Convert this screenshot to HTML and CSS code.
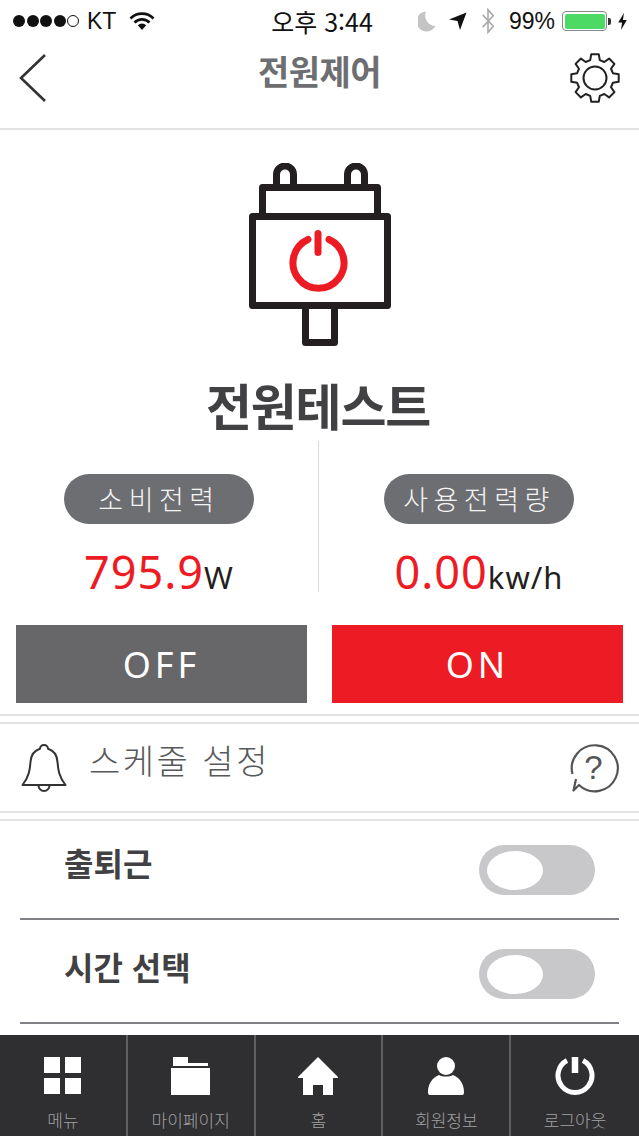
FILE: index.html
```html
<!DOCTYPE html>
<html lang="ko">
<head>
    <meta charset="UTF-8">
    <title>전원제어</title>
    <link rel="stylesheet" href="styles.css">
</head>
<body>
<div class="screen">
    <div class="statusbar">
        <div class="status-left">
            <span class="dots"><i></i><i></i><i></i><i></i><i class="empty"></i></span>
            <span>KT</span>
            <svg class="wifi" width="26" height="20" viewBox="0 0 26 20"><path d="M1.500 7.500a16 16 0 0 1 23 0M5.500 11.500a10.500 10.500 0 0 1 15 0" fill="none" stroke="#111" stroke-width="2.600"/><path d="M8.800 14.200a6 6 0 0 1 8.400 0L13 19z" fill="#111"/></svg>
        </div>
        <div class="status-time">오후 3:44</div>
        <div class="status-right">
            <svg width="18" height="22" viewBox="0 0 18 22"><path d="M8 1.500a10 10 0 1 0 9.500 14.500A10.500 10.500 0 0 1 8 1.500z" fill="#c4c4c4"/></svg>
            <svg width="18" height="18" viewBox="0 0 18 18"><path d="M17.500 .5L0 7.500l8.500 1.500L11 18z" fill="#111"/></svg>
            <svg width="16" height="28" viewBox="0 0 16 32"><path d="M2 9l12 13-6 7V3l6 7L2 23" fill="none" stroke="#a8a8a8" stroke-width="1.800"/></svg>
            <span class="pct">99%</span>
            <span class="battery-wrap"><span class="battery"><span class="battery-fill"></span></span><span class="nub"></span></span>
            <svg width="11" height="19" viewBox="0 0 11 20"><path d="M7 1L1 11h4l-1 8 6-10.500H6z" fill="#111"/></svg>
        </div>
    </div>

    <div class="navbar">
        <svg width="28" height="50" viewBox="0 0 28 50"><path d="M26 2L2 25l24 23" fill="none" stroke="#333" stroke-width="2.600"/></svg>
        <div class="nav-title">전원제어</div>
        <svg width="50" height="50" viewBox="0 0 50 50"><circle cx="25" cy="25" r="11.500" fill="none" stroke="#222" stroke-width="2"/><path d="M21.250 1.300H28.750L29.800 7.100L34.250 8.980L39.100 5.580L44.420 10.900L41.020 15.750L42.870 20.210L48.700 21.250V28.750L42.870 29.790L41.020 34.250L44.420 39.100L39.100 44.420L34.250 41.020L29.800 42.870L28.750 48.700H21.250L20.200 42.870L15.750 41.020L10.900 44.420L5.580 39.100L8.980 34.250L7.130 29.790L1.300 28.750V21.250L7.130 20.210L8.980 15.750L5.580 10.900L10.900 5.580L15.750 8.980L20.200 7.130z" fill="none" stroke="#222" stroke-width="2" stroke-linejoin="round"/></svg>
    </div>

    <div class="device">
        <svg class="device-icon" width="142" height="184" viewBox="249 163 142 184">
            <g fill="none" stroke="#231f20" stroke-width="7" stroke-linejoin="round">
                <path d="M276.500 187v-12.500a8.500 8.500 0 0 1 17 0V187M347.500 187v-12.500a8.500 8.500 0 0 1 17 0V187"/>
                <path d="M262.500 216v-28.500h115V216"/>
                <rect x="252.500" y="216.500" width="135" height="89"/>
                <path d="M305.500 306v36.500h29V306"/>
            </g>
            <g fill="none" stroke="#ed1c24" stroke-width="7" stroke-linecap="round">
                <path d="M308 239.500a25.500 25.500 0 1 0 21 0"/>
                <path d="M318 233.500v19"/>
            </g>
        </svg>
        <h1 class="device-name">전원테스트</h1>
    </div>

    <div class="stats">
        <div class="stat">
            <div class="pill">소비전력</div>
            <div class="value"><span class="num">795.9</span>W</div>
        </div>
        <div class="stat">
            <div class="pill">사용전력량</div>
            <div class="value"><span class="num">0.00</span>kw/h</div>
        </div>
    </div>

    <div class="buttons">
        <button class="btn btn-off">OFF</button>
        <button class="btn btn-on">ON</button>
    </div>

    <div class="schedule">
        <svg width="46" height="50" viewBox="0 0 46 50"><path d="M23 2c2.500 0 4 1.800 4 3.800 6 1.800 9 7 9.500 13 .5 8 1.500 15 8 23.200H1.500c6.500-8.200 7.500-15.200 8-23.200.5-6 3.500-11.200 9.500-13C19 3.800 20.500 2 23 2z" fill="none" stroke="#333" stroke-width="2" stroke-linejoin="round"/><path d="M17.500 42.500a5.500 5.500 0 0 0 11 0" fill="none" stroke="#333" stroke-width="2"/></svg>
        <span class="schedule-title">스케줄 설정</span>
        <svg class="help" width="50" height="50" viewBox="0 0 50 50"><path d="M2.500 31A23 23 0 1 1 9 42L3.500 47.500 6 36" fill="none" stroke="#555" stroke-width="2.200" stroke-linejoin="round"/><text x="23.500" y="36" text-anchor="middle" class="help-mark">?</text></svg>
    </div>

    <div class="rows">
        <div class="row">
            <span class="row-label">출퇴근</span>
            <span class="toggle"><span class="knob"></span></span>
        </div>
        <div class="row">
            <span class="row-label">시간 선택</span>
            <span class="toggle"><span class="knob"></span></span>
        </div>
    </div>

    <div class="tabbar">
        <div class="tab">
            <svg width="37" height="38" viewBox="0 0 37 38"><path d="M0 0h16v16H0zM21 0h16v16H21zM0 21h16v16H0zM21 21h16v16H21z" fill="#fff"/></svg>
            <span>메뉴</span>
        </div>
        <div class="tab">
            <svg width="39" height="38" viewBox="0 0 39 38"><path d="M2 0h15v6h20v3H2zM0 11h39v27H0z" fill="#fff"/></svg>
            <span>마이페이지</span>
        </div>
        <div class="tab">
            <svg width="40" height="38" viewBox="0 0 40 38"><path d="M20 0l20 20v1h-5v17H25V28H15v10H5V21H0v-1z" fill="#fff"/></svg>
            <span>홈</span>
        </div>
        <div class="tab">
            <svg width="36" height="38" viewBox="0 0 36 38"><circle cx="18" cy="9" r="9" fill="#fff"/><path d="M0 35c0-8 4-14 11-17 4 2 10 2 14 0 7 3 11 9 11 17v1a2 2 0 0 1-2 2H2a2 2 0 0 1-2-2z" fill="#fff"/></svg>
            <span>회원정보</span>
        </div>
        <div class="tab">
            <svg width="40" height="38" viewBox="0 0 40 38"><path d="M12 3.500a17 17 0 1 0 16 0" fill="none" stroke="#fff" stroke-width="5"/><path d="M20 0v16" stroke="#fff" stroke-width="6.500"/></svg>
            <span>로그아웃</span>
        </div>
    </div>
</div>
</body>
</html>
```

FILE: styles.css
```css
* {
    box-sizing: border-box;
}
body {
    margin: 0;
    background-color: #fff;
    font-family: "Noto Sans CJK KR", "Noto Sans", sans-serif;
    color: #333;
}
.screen {
    width: 639px;
    height: 1136px;
    display: flex;
    flex-direction: column;
    overflow: hidden;
}

/* status bar */
.statusbar {
    height: 40px;
    display: grid;
    grid-template-columns: 1fr auto 1fr;
    align-items: center;
    padding: 2px 11px 0 13px;
    font-family: "Liberation Sans", "Noto Sans CJK KR", sans-serif;
    font-size: 23px;
    color: #111;
}
.status-left {
    display: flex;
    align-items: center;
    gap: 8px;
}
.dots {
    display: flex;
    gap: 1.500px;
}
.dots i {
    width: 12px;
    height: 12px;
    border-radius: 50%;
    background-color: #111;
}
.dots i.empty {
    background: none;
    border: 1px solid #111;
}
.wifi {
    margin-left: 5px;
}
.status-time {
    margin-left: 3px;
    font-size: 25px;
    font-family: "Noto Sans CJK KR", sans-serif;
    line-height: 38px;
}
.status-right {
    display: flex;
    align-items: center;
    justify-content: flex-end;
    gap: 13px;
}
.pct {
    margin-right: -6px;
}
.battery-wrap {
    display: flex;
    align-items: center;
    margin-right: -7px;
}
.battery {
    width: 45px;
    height: 20px;
    border: 1.500px solid #888;
    border-radius: 4px;
    padding: 1.500px;
}
.battery-fill {
    display: block;
    height: 100%;
    background-color: #4cd964;
    border-radius: 2px;
}
.nub {
    width: 3px;
    height: 7px;
    margin-left: 1px;
    background-color: #333;
    border-radius: 0 2px 2px 0;
}

/* nav */
.navbar {
    height: 90px;
    display: flex;
    align-items: center;
    justify-content: space-between;
    padding: 0 19px 13px 19px;
    border-bottom: 2px solid #e3e3e3;
}
.nav-title {
    font-size: 34px;
    font-weight: 700;
    color: #6d6e71;
    letter-spacing: -0.5px;
    line-height: 1;
    margin: 0 0 14px 22px;
}

/* device */
.device {
    display: flex;
    flex-direction: column;
    align-items: center;
    padding-top: 33px;
}
.device-name {
    margin: 24px 3px 4px 0;
    font-size: 50px;
    font-weight: 700;
    line-height: 66px;
    letter-spacing: -1.200px;
    color: #414042;
}

/* stats */
.stats {
    height: 151px;
    display: grid;
    grid-template-columns: 319px 320px;
    grid-template-rows: 151px;
}
.stat {
    display: flex;
    flex-direction: column;
    align-items: center;
    padding-top: 33px;
}
.stat:first-child {
    border-right: 1px solid #d8d8d8;
}
.pill {
    width: 190px;
    height: 50px;
    border-radius: 25px;
    background-color: #6d6e71;
    color: #f4f4f4;
    font-size: 27px;
    font-weight: 300;
    letter-spacing: 5.500px;
    line-height: 50px;
    text-align: center;
}
.value {
    margin-top: 16px;
    font-family: "Noto Sans", sans-serif;
    font-size: 31px;
    line-height: 64px;
    color: #231f20;
    letter-spacing: 1px;
}
.num {
    font-size: 45px;
    color: #ed1c24;
    letter-spacing: 1px;
}

/* buttons */
.buttons {
    display: flex;
    justify-content: space-between;
    padding: 33px 16px 11px 16px;
    border-bottom: 2px solid #e3e3e3;
}
.btn {
    width: 291px;
    height: 78px;
    border: none;
    color: #fff;
    font-family: "Noto Sans", sans-serif;
    font-size: 36px;
    letter-spacing: 4px;
}
.btn-off {
    background-color: #676668;
}
.btn-on {
    background-color: #ed1c24;
}

/* schedule header */
.schedule {
    margin-top: 6px;
    height: 91px;
    display: flex;
    align-items: center;
    padding: 0 19px 0 21px;
    border-top: 2px solid #e3e3e3;
    border-bottom: 2px solid #e3e3e3;
}
.schedule-title {
    margin-left: 22px;
    margin-bottom: 16px;
    font-size: 34px;
    font-weight: 300;
    letter-spacing: 2.500px;
    color: #58595b;
}
.help {
    margin-left: auto;
}
.help-mark {
    font-family: "Liberation Sans", sans-serif;
    font-size: 33px;
    fill: #555;
}

/* rows */
.rows {
    margin-top: 6px;
    border-top: 2px solid #e3e3e3;
    padding: 0 20px;
    flex: 1;
}
.row {
    height: 104px;
    display: flex;
    align-items: center;
    justify-content: space-between;
    padding: 6px 24px 0 44px;
    border-bottom: 2px solid #808285;
}
.row:first-child {
    height: 99px;
    padding-top: 0;
}
.row-label {
    font-size: 32px;
    font-weight: 700;
    color: #414042;
    margin-bottom: 16px;
}
.toggle {
    width: 116px;
    height: 50px;
    border-radius: 25px;
    background-color: #c8c7c9;
    padding: 6px 8px;
}
.knob {
    display: block;
    width: 56px;
    height: 39px;
    border-radius: 50%;
    background-color: #fff;
}

/* tab bar */
.tabbar {
    height: 101px;
    display: grid;
    grid-template-columns: repeat(5, 1fr);
    background-color: #2f2e30;
}
.tab {
    display: flex;
    flex-direction: column;
    align-items: center;
    padding-top: 22px;
    border-right: 2px solid #5f6062;
    color: #a0a1a3;
    font-size: 17px;
    font-weight: 300;
}
.tab:last-child {
    border-right: none;
}
.tab svg {
    flex: none;
}
.tab span {
    margin-top: 14px;
    line-height: 22px;
}
```
